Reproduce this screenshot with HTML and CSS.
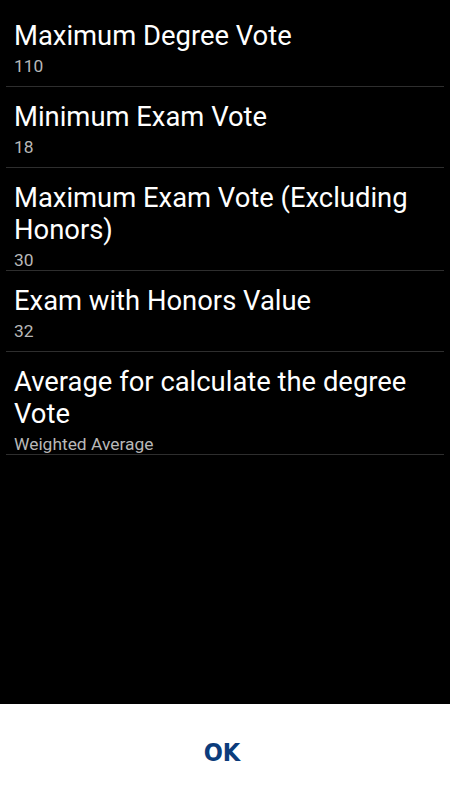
FILE: index.html
```html
<!DOCTYPE html>
<html lang="en">
<head>
  <meta charset="UTF-8" />
  <title>Settings</title>
  <link rel="stylesheet" href="styles.css">
</head>
<body>
  <div class="screen">
    <ul class="prefs">
      <li class="pref">
        <div class="pref-title">Maximum Degree Vote</div>
        <div class="pref-summary">110</div>
      </li>
      <li class="pref">
        <div class="pref-title">Minimum Exam Vote</div>
        <div class="pref-summary">18</div>
      </li>
      <li class="pref">
        <div class="pref-title">Maximum Exam Vote (Excluding Honors)</div>
        <div class="pref-summary">30</div>
      </li>
      <li class="pref">
        <div class="pref-title">Exam with Honors Value</div>
        <div class="pref-summary">32</div>
      </li>
      <li class="pref">
        <div class="pref-title">Average for calculate the degree Vote</div>
        <div class="pref-summary">Weighted Average</div>
      </li>
    </ul>

    <footer class="bottom">
      <button class="ok-btn" type="button">OK</button>
    </footer>
  </div>
</body>
</html>
```

FILE: styles.css
```css
html, body { margin: 0; padding: 0; background: #000; }
body { font-family: Roboto, "Noto Sans", Arial, sans-serif; color: #fff; }
.screen { display: flex; flex-direction: column; height: 800px; width: 450px; }
.prefs { list-style: none; margin: 0; padding: 6px 0 0; flex: 1; }
.pref { min-height: 81px; margin: 0 6px; padding: 14px 8px 0; border-bottom: 1px solid #2e2e2e; box-sizing: border-box; }
.pref-title { font-size: 27.4px; line-height: 32px; color: #fff; }
.pref-summary { margin-top: 4px; font-size: 17.4px; line-height: 20px; color: #b8b8b8; }
.bottom { height: 96px; background: #fff; display: flex; align-items: center; justify-content: center; }
.ok-btn { background: none; border: none; padding: 0; margin-left: -6px; font-family: "DejaVu Sans Condensed", "DejaVu Sans", sans-serif; font-weight: bold; font-size: 25px; color: #0b3c7c; cursor: pointer; }
```
